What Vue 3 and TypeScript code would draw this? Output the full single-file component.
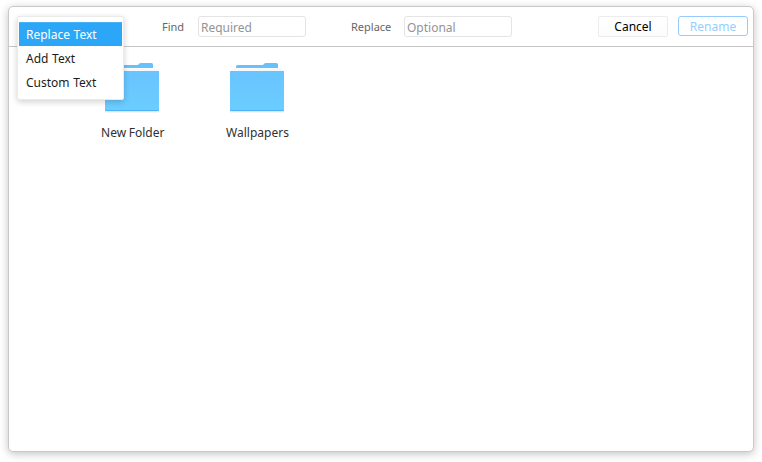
<script setup lang="ts">
import { ref } from 'vue'

const modes: string[] = ['Replace Text', 'Add Text', 'Custom Text']
const active = ref(0)
const find = ref('')
const replacement = ref('')
const folders: string[] = ['New Folder', 'Wallpapers']
</script>

<template>
  <div class="desktop">
    <main class="window">
      <header class="toolbar">
        <label class="field find">
          <span>Find</span>
          <input v-model="find" placeholder="Required" />
        </label>
        <label class="field replace">
          <span>Replace</span>
          <input v-model="replacement" placeholder="Optional" />
        </label>
        <div class="actions">
          <button class="cancel">Cancel</button>
          <button class="rename" disabled>Rename</button>
        </div>
      </header>
      <section class="files">
        <figure v-for="name in folders" :key="name" class="file">
          <svg class="folder" width="63" height="57" viewBox="0 0 63 57">
            <defs>
              <linearGradient id="front" x1="0" y1="0" x2="0" y2="1">
                <stop offset="0" stop-color="#69c3ff" />
                <stop offset="1" stop-color="#6bcdff" />
              </linearGradient>
            </defs>
            <path d="M10 12V6.5Q10 5 11.5 5H37Q38 3 40 3H50.5Q52 3 52 4.5V12Z" fill="#67c1fb" />
            <path d="M8 8H54L58 11V13H4V11Z" fill="#f4f9fb" />
            <path d="M10 8H52V9H10Z" fill="#fff" />
            <rect x="4" y="12" width="54" height="41" rx="1.5" fill="#000" opacity=".04" />
            <rect x="4" y="12" width="54" height="40" rx="1.5" fill="#000" opacity=".07" />
            <rect x="4" y="11" width="54" height="40" rx="1" fill="#4fb4f7" />
            <rect x="4" y="11" width="54" height="39" rx="1" fill="url(#front)" />
          </svg>
          <figcaption>{{ name }}</figcaption>
        </figure>
      </section>
    </main>
    <ul class="menu">
      <li v-for="(mode, i) in modes" :key="mode" :class="{ selected: i === active }" @click="active = i">{{ mode }}</li>
    </ul>
  </div>
</template>

<style>
body {
  background: #fff;
  overflow: hidden;
}
</style>

<style scoped>
.desktop {
  position: relative;
  box-sizing: border-box;
  width: 762px;
  height: 462px;
  padding: 6px 8px 10px;
  font-family: "Noto Sans", sans-serif;
  font-size: 12px;
  color: #303030;
  overflow: hidden;
}
.window {
  box-sizing: border-box;
  height: 446px;
  border: 1px solid #c9c9c9;
  border-radius: 5px;
  background: #fff;
  box-shadow: 0 2px 9px rgba(0, 0, 0, 0.24);
}
.toolbar {
  display: flex;
  box-sizing: border-box;
  height: 40px;
  padding: 9px 5px 0 153px;
  border-bottom: 1px solid #c6c6c6;
}
.field {
  display: flex;
  height: 21px;
  font-size: 11px;
  line-height: 22px;
  color: #666;
}
.find span {
  width: 36px;
}
.replace {
  margin-left: 45px;
}
.replace span {
  width: 53px;
}
input {
  box-sizing: border-box;
  width: 108px;
  height: 21px;
  padding: 2px 2px 0;
  border: 1px solid #e4e4e4;
  border-radius: 3px;
  background: #fff;
  font: 12px "Noto Sans", sans-serif;
  outline: none;
}
input::placeholder {
  color: #949494;
}
.actions {
  display: flex;
  gap: 10px;
  margin-left: auto;
}
button {
  box-sizing: border-box;
  width: 70px;
  height: 21px;
  padding: 0;
  border: 1px solid #ececec;
  border-radius: 2px;
  background: linear-gradient(#fff, #fcfcfc);
  font: 12px/19px "Noto Sans", sans-serif;
  color: #000;
}
.rename {
  height: 20px;
  border-color: #95ccff;
  border-radius: 3px;
  background: #fff;
  color: #95cfff;
}
.files {
  display: flex;
  padding: 13px 0 0 61px;
}
.file {
  display: flex;
  flex-direction: column;
  align-items: center;
  width: 125px;
  margin: 0;
}
.folder {
  display: block;
}
figcaption {
  margin-top: 8px;
  line-height: 16px;
  word-spacing: -0.5px;
}
.file:first-child figcaption {
  padding-left: 0.5px;
}
.menu {
  position: absolute;
  top: 16px;
  left: 17px;
  box-sizing: border-box;
  width: 107px;
  height: 84px;
  margin: 0;
  padding: 5px 1px;
  border: 1px solid #ebebeb;
  border-radius: 2px;
  background: #fff;
  box-shadow: 0 2px 6px rgba(0, 0, 0, 0.18);
  list-style: none;
}
.menu li {
  height: 24px;
  padding-left: 7px;
  line-height: 25px;
  word-spacing: 0.5px;
  color: #1c1c1c;
}
.menu .selected {
  background: #2ca7f8;
  box-shadow: inset 0 1px #48b0f5;
  color: #fff;
}
</style>
